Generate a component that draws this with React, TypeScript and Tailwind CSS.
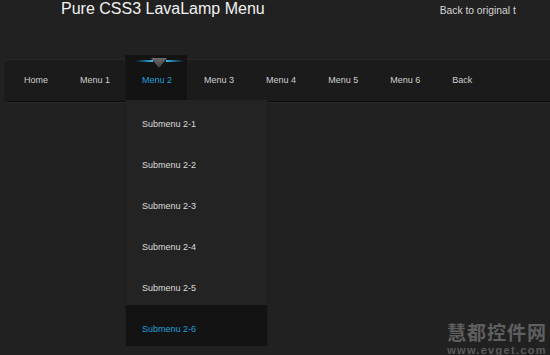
import React from "react";

const items = ["Home", "Menu 1", "Menu 2", "Menu 3", "Menu 4", "Menu 5", "Menu 6", "Back"];
const subs = ["Submenu 2-1", "Submenu 2-2", "Submenu 2-3", "Submenu 2-4", "Submenu 2-5", "Submenu 2-6"];

export default function App() {
  return (
    <div
      className="relative w-[550px] h-[355px] overflow-hidden bg-[#212121]"
      style={{ fontFamily: '"Liberation Sans", Arial, sans-serif' }}
    >
      {/* header */}
      <div className="flex h-[59px] items-start">
        <div className="ml-[61px] text-[16px] leading-[18px] text-[#f2f2f2] whitespace-nowrap">
          Pure CSS3 LavaLamp Menu
        </div>
        <div className="ml-[175px] mt-[5px] whitespace-nowrap text-[10.3px] leading-[12px] text-[#d6d6d6]">
          Back to original t
        </div>
      </div>

      {/* nav bar */}
      <div className="relative ml-[3px] h-[42px] rounded-l-[6px] border-t border-l border-[#272727] bg-[#1b1b1b] shadow-[0_1px_0_#0d0d0d,0_2px_0_#292929]">
        {/* lava lamp */}
        <div className="absolute left-[121px] top-[-5px] h-[46px] w-[62px] bg-[#131313]">
          <svg width="62" height="14" className="absolute left-0 top-0">
            <defs>
              <linearGradient id="bl" x1="0" x2="1" y1="0" y2="0">
                <stop offset="0" stopColor="#1ea6e2" stopOpacity="0" />
                <stop offset="1" stopColor="#3cc0f5" stopOpacity="1" />
              </linearGradient>
              <linearGradient id="br" x1="0" x2="1" y1="0" y2="0">
                <stop offset="0" stopColor="#3cc0f5" stopOpacity="1" />
                <stop offset="1" stopColor="#1ea6e2" stopOpacity="0" />
              </linearGradient>
              <linearGradient id="tri" x1="0" x2="0" y1="0" y2="1">
                <stop offset="0" stopColor="#6a6a6a" />
                <stop offset="1" stopColor="#3e3e3e" />
              </linearGradient>
            </defs>
            <rect x="10" y="5" width="18" height="2" fill="url(#bl)" />
            <rect x="41" y="5" width="18" height="2" fill="url(#br)" />
            <polygon points="26,3 42,3 34,13" fill="url(#tri)" />
          </svg>
        </div>
        <div className="relative flex h-full items-center pl-[4px]">
          {items.map((it, i) => (
            <div
              key={it}
              className={
                "flex h-full items-center px-4 text-[9px] " +
                (i === 2 ? "text-[#1f9fda]" : "text-[#cfcfcf] shadow-[inset_-1px_0_0_#191919]")
              }
            >
              {it}
            </div>
          ))}
        </div>
      </div>

      {/* dropdown */}
      <div className="absolute left-[126px] top-[100px] w-[141px] bg-[#232323] shadow-[1px_0_0_#1c1c1c,-1px_0_0_#1c1c1c]">
        {subs.map((s, i) => (
          <div
            key={s}
            className={
              "flex h-[41px] items-center pl-4 pt-[9px] text-[9px] " +
              (i === 5 ? "bg-[#131313] text-[#1f9fda]" : "text-[#dcdcdc]")
            }
          >
            {s}
          </div>
        ))}
      </div>

      {/* watermark */}
      <div className="absolute left-[447px] top-[322px] flex flex-col items-center">
        <div
          className="text-[19px] font-bold leading-[20px] text-[#5f5f5f] tracking-[1px]"
          style={{ fontFamily: '"Noto Sans CJK SC", sans-serif' }}
        >
          慧都控件网
        </div>
        <div className="mt-[3px] text-[11px] font-bold leading-[11px] text-[#5a5a5a] tracking-[1.3px]">
          www.evget.com
        </div>
      </div>
    </div>
  );
}
